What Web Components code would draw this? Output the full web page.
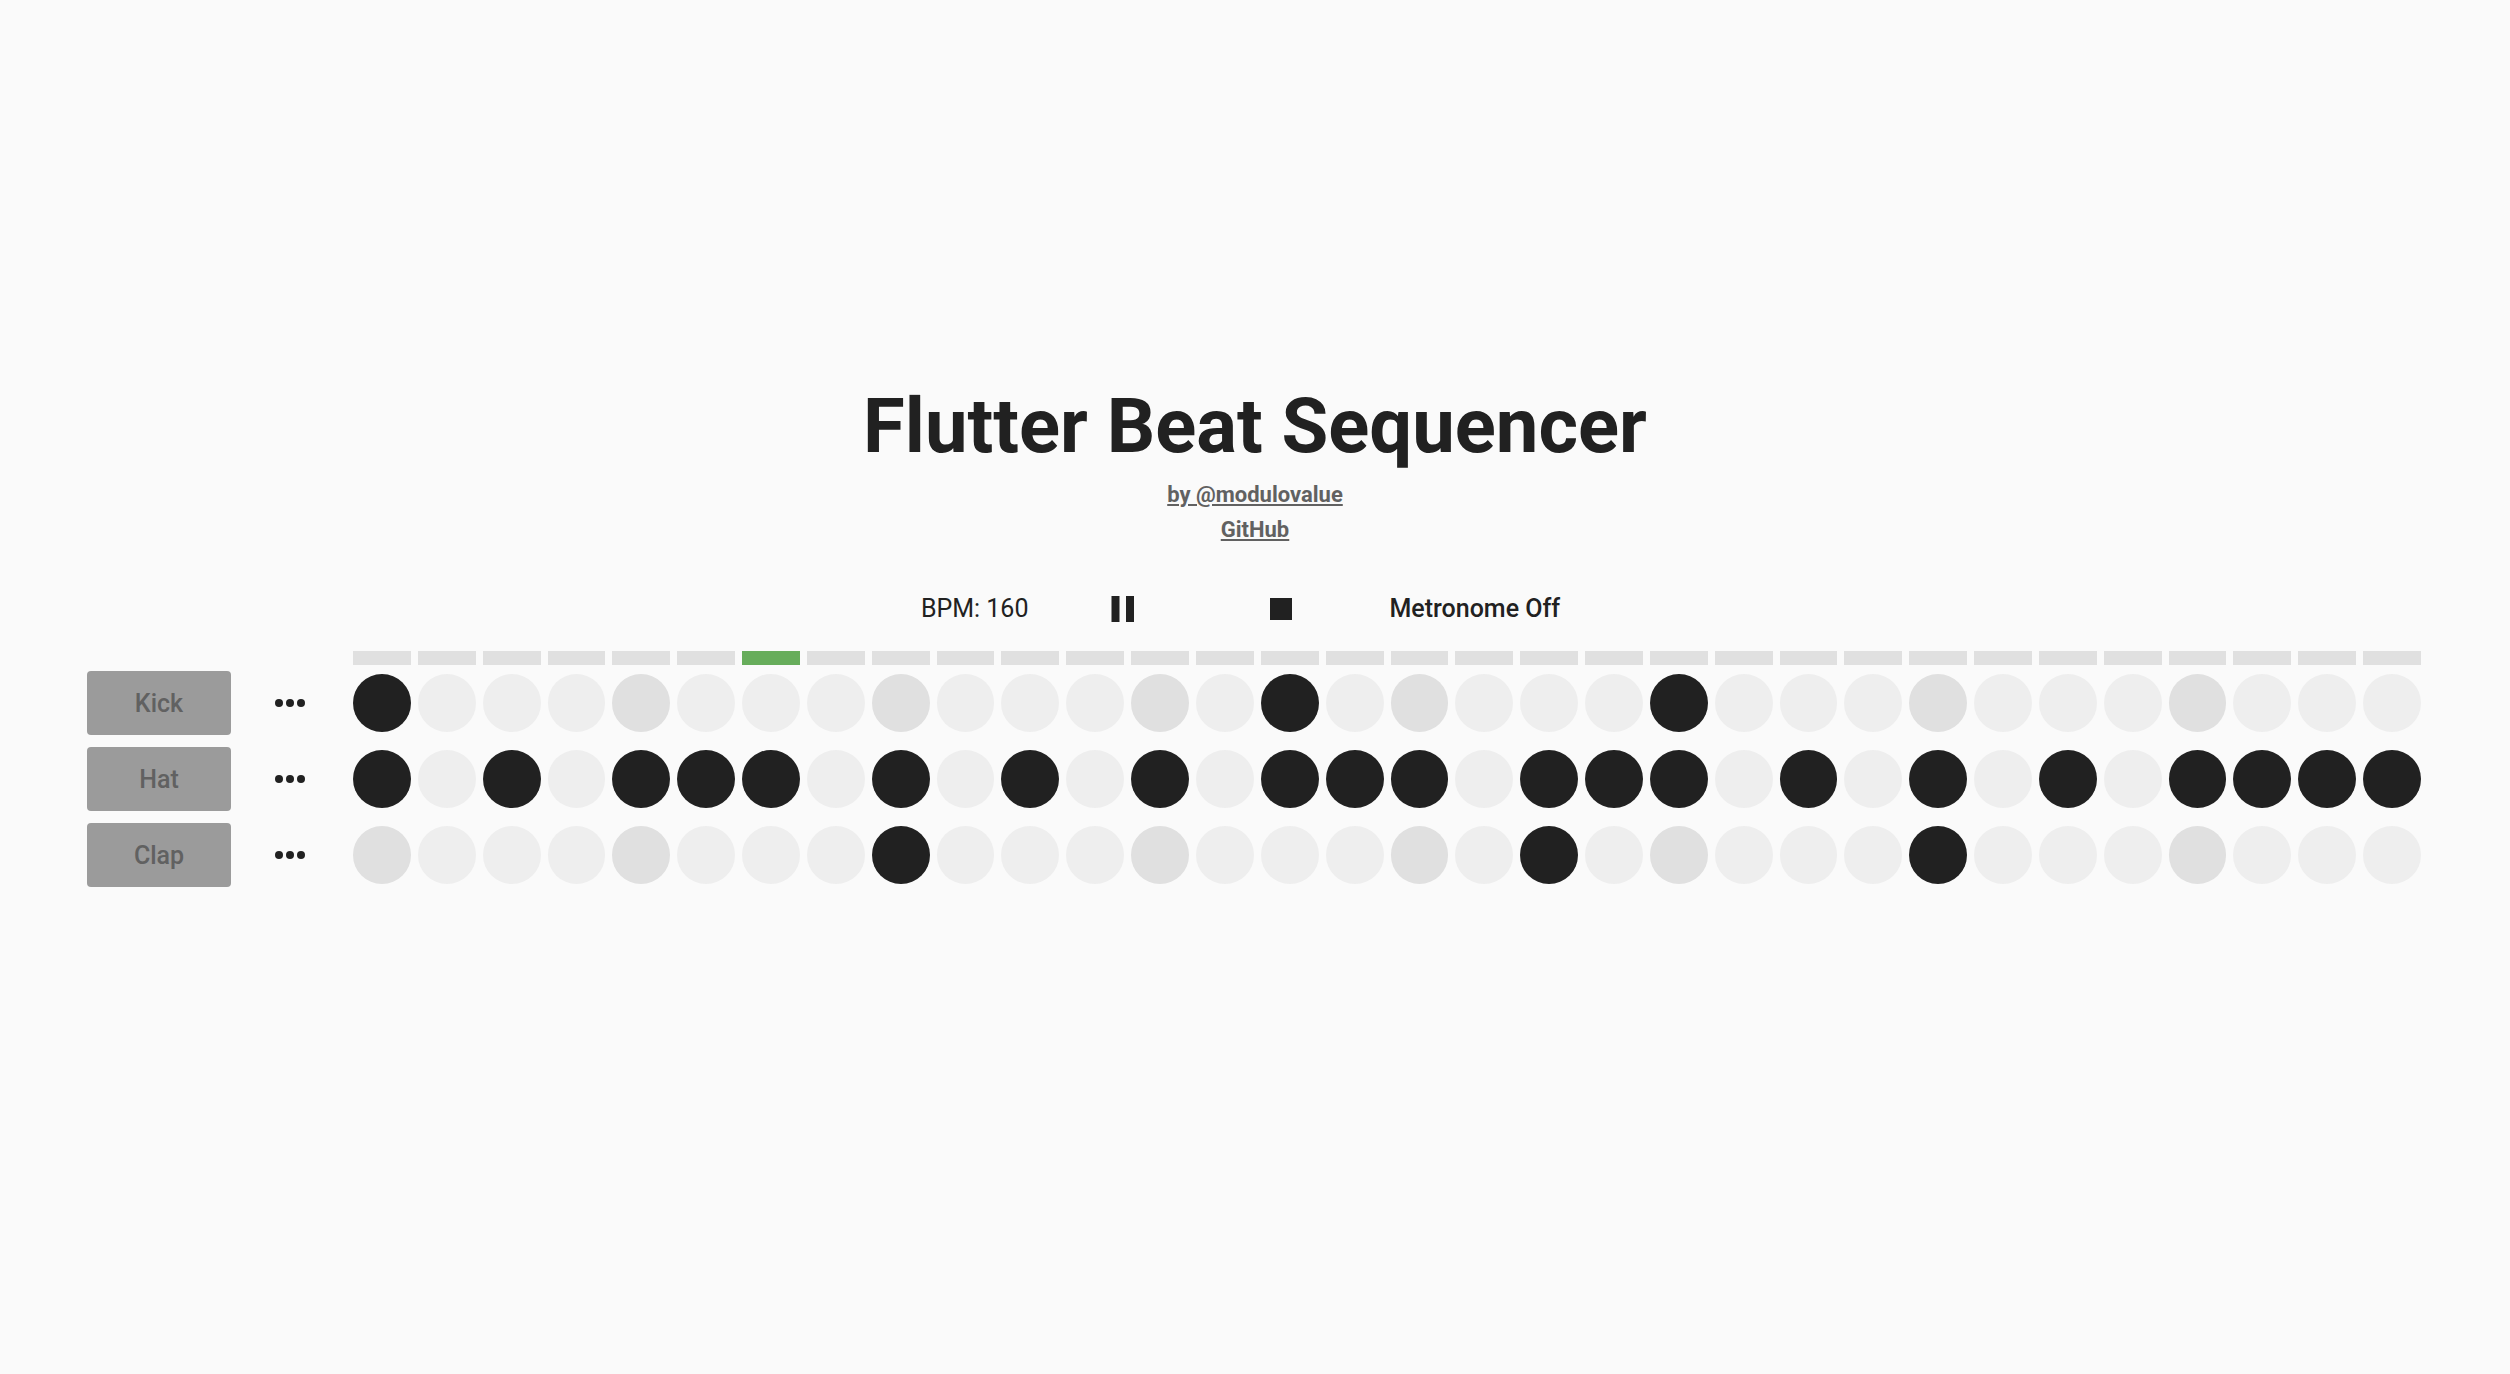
<!DOCTYPE html>
<html lang="en">
<head>
<meta charset="utf-8">
<title>Flutter Beat Sequencer</title>
<style>
  body { margin: 0; background: #fafafa; color: #212121; font-family: Roboto, sans-serif; }
</style>
</head>
<body>
<beat-sequencer>
  <beat-header>
    <span slot="title">Flutter Beat Sequencer</span>
    <a slot="links" href="#modulovalue">by @modulovalue</a>
    <a slot="links" href="#github">GitHub</a>
  </beat-header>
  <beat-transport bpm="160">Metronome Off</beat-transport>
  <beat-timeline steps="32" current="6"></beat-timeline>
  <beat-track steps="32" on="0,14,20">Kick</beat-track>
  <beat-track steps="32" on="0,2,4,5,6,8,10,12,14,15,16,18,19,20,22,24,26,28,29,30,31">Hat</beat-track>
  <beat-track steps="32" on="8,18,24">Clap</beat-track>
</beat-sequencer>

<script>
  // Columns shared by the timeline and the tracks: pad, menu, steps.
  const rowStyles = `
    :host { display: grid; grid-template-columns: 144px 118px 1fr; align-items: center; }
    .steps { grid-column: 3; display: grid; grid-auto-flow: column; grid-auto-columns: 1fr; gap: 7px; padding: 0 2px 0 4px; }
  `;
  const buttonReset = `
    button { margin: 0; border: 0; padding: 0; background: none; color: inherit; font: inherit; cursor: pointer; }
    svg { display: block; fill: currentColor; }
  `;

  customElements.define('beat-sequencer', class extends HTMLElement {
    constructor() {
      super();
      this.attachShadow({ mode: 'open' }).innerHTML = `
        <style>
          :host { display: flex; flex-direction: column; justify-content: center;
            min-height: 100vh; box-sizing: border-box; padding: 0 87px 106px; }
          main { display: flex; flex-direction: column; gap: 12px; }
          ::slotted(beat-timeline) { margin-bottom: -6px; }
        </style>
        <main><slot></slot></main>`;
    }
  });

  customElements.define('beat-header', class extends HTMLElement {
    constructor() {
      super();
      this.attachShadow({ mode: 'open' }).innerHTML = `
        <style>
          :host { display: flex; flex-direction: column; align-items: center; }
          h1 { margin: 0; font-size: 76px; line-height: 90px; font-weight: 700; text-align: center; }
          nav { display: flex; flex-direction: column; align-items: center; padding-top: 6px; }
          ::slotted(a) { color: #616161; font-size: 22px; line-height: 35px; font-weight: 700;
            text-decoration: underline; }
        </style>
        <h1><slot name="title"></slot></h1>
        <nav><slot name="links"></slot></nav>`;
    }
  });

  customElements.define('beat-transport', class extends HTMLElement {
    connectedCallback() {
      this.attachShadow({ mode: 'open' }).innerHTML = `
        <style>
          ${buttonReset}
          :host { display: flex; justify-content: center; align-items: center; padding-top: 20px;
            font-size: 25px; line-height: 60px; }
          .bpm { padding-right: 16px; }
          .icon { width: 158px; height: 60px; display: flex; justify-content: center; align-items: center; }
          .text { padding: 0 29px; font-weight: 500; line-height: 60px; }
        </style>
        <span class="bpm">BPM: ${this.getAttribute('bpm')}</span>
        <button class="icon" aria-label="Pause">
          <svg width="44" height="44" viewBox="0 0 44 44"><path d="M10.5 9h8v26h-8zM25 9h8v26h-8z"/></svg>
        </button>
        <button class="icon" aria-label="Stop">
          <svg width="44" height="44" viewBox="0 0 44 44"><path d="M11 11h22v22H11z"/></svg>
        </button>
        <button class="text"><slot></slot></button>`;
    }
  });

  customElements.define('beat-timeline', class extends HTMLElement {
    connectedCallback() {
      const steps = Number(this.getAttribute('steps'));
      const current = Number(this.getAttribute('current'));
      const bars = Array.from({ length: steps }, (_, i) => `<i class="${i === current ? 'now' : ''}"></i>`).join('');
      this.attachShadow({ mode: 'open' }).innerHTML = `
        <style>
          ${rowStyles}
          i { display: block; height: 14px; background: #e0e0e0; }
          .now { background: #67ad5b; }
        </style>
        <div class="steps">${bars}</div>`;
    }
  });

  customElements.define('beat-track', class extends HTMLElement {
    connectedCallback() {
      const steps = Number(this.getAttribute('steps'));
      const on = new Set(this.getAttribute('on').split(',').map(Number));
      const name = this.textContent;
      const boxes = Array.from({ length: steps }, (_, i) =>
        `<input type="checkbox" aria-label="${name} ${i + 1}" ${on.has(i) ? 'checked' : ''}>`).join('');
      this.attachShadow({ mode: 'open' }).innerHTML = `
        <style>
          ${rowStyles}
          ${buttonReset}
          :host { height: 64px; }
          .pad { height: 64px; border-radius: 4px; background: #9b9b9b; color: #616161;
            font-size: 25px; font-weight: 500; }
          .menu { justify-self: center; }
          input { appearance: none; display: block; margin: 0; width: 100%; aspect-ratio: 1;
            border-radius: 50%; background: #eeeeee; cursor: pointer; }
          input:nth-child(4n + 1) { background: #e0e0e0; }
          input:checked { background: #212121; }
        </style>
        <button class="pad"><slot></slot></button>
        <button class="menu" aria-label="${name} patterns">
          <svg width="44" height="44" viewBox="0 0 44 44">
            <circle cx="11" cy="22" r="4"/><circle cx="22" cy="22" r="4"/><circle cx="33" cy="22" r="4"/>
          </svg>
        </button>
        <div class="steps">${boxes}</div>`;
    }
  });
</script>
</body>
</html>
